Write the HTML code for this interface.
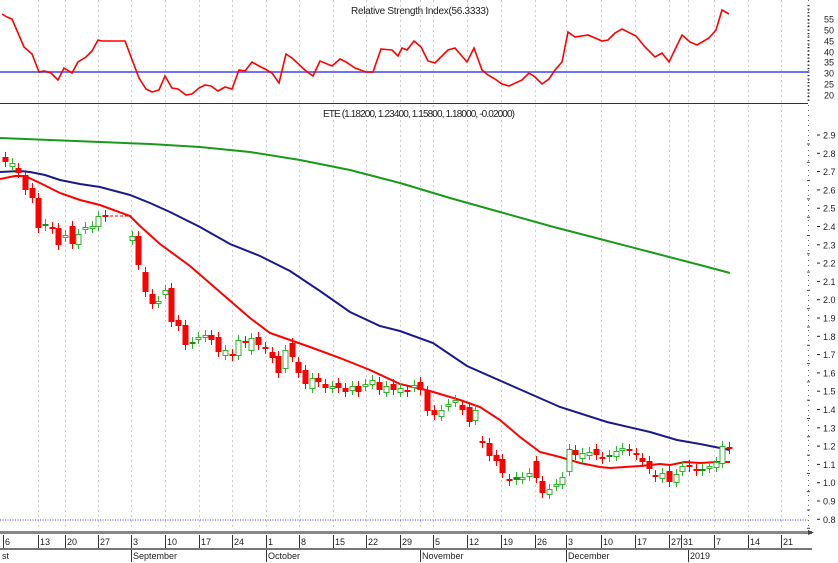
<!DOCTYPE html>
<html><head><meta charset="utf-8"><style>
html,body{margin:0;padding:0;background:#fff;width:838px;height:563px;overflow:hidden}
svg{display:block;font-family:"Liberation Sans",sans-serif}
</style></head><body>
<svg id="s" width="838" height="563" viewBox="0 0 838 563">
<rect width="838" height="563" fill="#fff"/>
<g id="grid" stroke="#ccc" stroke-dasharray="2,3" stroke-width="1"></g>
<text x="420" y="14" font-size="10" text-anchor="middle" textLength="138" fill="#222">Relative Strength Index(56.3333)</text>
<line x1="0" y1="72" x2="808" y2="72" stroke="#7070ff" stroke-width="2"/>
<polyline id="rsi" fill="none" stroke="#f00" stroke-width="1.6"/>
<line x1="0" y1="103.5" x2="808" y2="103.5" stroke="#333" stroke-width="1"/>
<text x="323" y="117" font-size="10" textLength="192" fill="#222">ETE (1.18200, 1.23400, 1.15800, 1.18000, -0.02000)</text>
<polyline id="ma200" fill="none" stroke="#1a9a1a" stroke-width="2"/>
<polyline id="ma50" fill="none" stroke="#1a1a8a" stroke-width="2"/>
<polyline id="ma20" fill="none" stroke="#f00" stroke-width="2"/>
<line x1="105" y1="216" x2="130" y2="216" stroke="#f00" stroke-dasharray="3,2"/>
<g id="candles"></g>
<line x1="0" y1="520" x2="808" y2="520" stroke="#3333ff" stroke-dasharray="1,1.5" stroke-width="1"/>
<line x1="808.5" y1="0" x2="808.5" y2="532" stroke="#666" stroke-dasharray="1,4"/>
<g id="axis" font-size="9" fill="#222"></g>
<rect x="0" y="531" width="812" height="3" fill="#888"/>
<rect x="0" y="548" width="812" height="2" fill="#777"/>
<polygon points="808,530 814,532.5 808,535" fill="#444"/>
<g id="dates" font-size="9" fill="#222"></g>
</svg>
<script>
var NS="http://www.w3.org/2000/svg";
function el(p,t,a,txt){var e=document.createElementNS(NS,t);for(var k in a)e.setAttribute(k,a[k]);if(txt!=null)e.textContent=txt;p.appendChild(e);return e;}
var grid=document.getElementById('grid');
var gx=[38,65,98,131,165,199,232,266,299,333,366,400,420,433,467,501,535,566,601,635,669,688,714,748,781];
gx.forEach(function(x){el(grid,'line',{x1:x+.5,y1:0,x2:x+.5,y2:530});});
document.getElementById('rsi').setAttribute('points',"2,14 7,17 12,19 24,47 32,54 39,72 44,71 51,73 58,80 64,68 72,73 78,62 86,57 92,51 98,40 102,41 125,41 139,78 146,89 152,92 159,90 165,76 172,88 178,89 186,95 192,94 199,88 205,85 211,86 218,91 225,87 232,89 239,70 245,71 252,62 259,66 265,69 272,73 279,83 286,54 292,58 306,71 313,76 320,61 332,66 340,59 346,62 355,68 366,72 373,72 381,49 392,50 398,56 402,48 407,50 414,41 421,47 428,61 435,63 448,50 455,48 467,62 474,48 482,70 488,75 495,79 502,84 509,86 522,80 529,73 535,77 542,84 549,79 555,70 562,62 568,32 575,37 588,35 602,41 608,40 615,33 622,29 636,36 645,47 655,57 662,53 669,62 682,35 690,42 697,45 709,38 716,30 722,10 729,14");
document.getElementById('ma200').setAttribute('points',"0,138 50,140 100,142 150,144 200,147 250,152 300,160 350,170 400,183 420,189 450,198 500,212 550,226 600,239 650,252 700,265 730,273");
document.getElementById('ma50').setAttribute('points',"0,172 20,171 30,172 45,175 60,180 80,184 100,187 130,195 150,203 170,212 200,227 230,244 260,256 290,271 320,291 350,312 380,326 400,331 433,343 467,366 510,385 560,407 607,422 650,432 677,440 700,444 730,450");
document.getElementById('ma20').setAttribute('points',"0,179 15,176 25,176 40,183 60,193 80,200 100,205 130,216 140,226 160,244 190,266 220,292 250,318 270,333 290,340 310,347 340,358 370,370 400,384 430,391 460,400 480,407 500,420 520,437 540,452 560,457 580,463 600,467 610,468 640,466 660,464 670,465 685,462 700,463 718,462 730,462");
var C=[[5,157,162,'r'],[12,163,166,'g'],[18,168,173,'r'],[25,175,190,'r'],[32,188,198,'r'],[38,198,228,'r'],[45,224,226,'G'],[52,227,229,'r'],[58,228,245,'r'],[65,235,237,'g'],[72,226,244,'r'],[78,234,244,'g'],[85,227,229,'g'],[92,226,228,'g'],[98,216,226,'g'],[105,215,217,'r'],[132,236,240,'g'],[138,236,265,'r'],[145,272,292,'r'],[152,294,304,'r'],[158,301,303,'g'],[165,290,294,'g'],[171,288,322,'r'],[178,320,326,'r'],[185,325,345,'r'],[192,342,344,'G'],[198,337,339,'g'],[205,335,337,'g'],[211,335,340,'r'],[218,337,352,'r'],[225,350,355,'g'],[232,354,356,'r'],[238,340,355,'g'],[245,341,343,'r'],[251,338,350,'g'],[258,337,345,'r'],[265,347,349,'r'],[272,352,358,'r'],[278,356,373,'r'],[285,350,368,'g'],[292,343,357,'r'],[298,362,373,'r'],[305,370,384,'r'],[312,378,388,'g'],[318,378,382,'r'],[325,384,388,'r'],[332,386,388,'g'],[338,383,388,'r'],[345,388,392,'r'],[352,386,390,'g'],[358,386,392,'r'],[365,384,386,'g'],[372,380,384,'g'],[379,382,390,'r'],[386,386,392,'g'],[393,384,390,'r'],[400,388,392,'g'],[407,390,392,'r'],[414,385,387,'g'],[420,382,390,'r'],[427,391,411,'r'],[434,410,415,'r'],[441,410,416,'g'],[448,404,406,'g'],[455,400,402,'g'],[462,405,410,'r'],[469,407,422,'r'],[475,410,420,'g'],[482,441,443,'r'],[489,443,456,'r'],[496,455,461,'r'],[502,459,473,'r'],[509,479,481,'r'],[516,477,480,'G'],[522,477,479,'g'],[529,473,476,'g'],[536,461,478,'r'],[542,481,493,'r'],[549,489,494,'g'],[556,484,486,'g'],[562,477,484,'g'],[569,449,471,'g'],[575,450,455,'r'],[582,453,458,'g'],[589,452,455,'g'],[596,449,455,'r'],[602,457,459,'r'],[609,455,457,'G'],[616,451,456,'g'],[622,448,450,'g'],[629,449,451,'r'],[636,453,455,'r'],[642,458,462,'r'],[649,461,469,'r'],[655,475,477,'r'],[662,473,478,'g'],[669,471,482,'r'],[676,474,482,'g'],[682,466,471,'g'],[689,465,467,'r'],[696,469,471,'r'],[702,469,471,'G'],[709,466,468,'g'],[716,462,467,'g'],[722,446,463,'g'],[729,447,449,'r']];
var cg=document.getElementById('candles');
C.forEach(function(c){var x=c[0],col=(c[3]=='r')?'#f00':'#2fb52f';
 el(cg,'line',{x1:x+.5,y1:c[1]-5,x2:x+.5,y2:c[2]+5,stroke:col,'stroke-width':1});
 if(c[3]=='g') el(cg,'rect',{x:x-2,y:c[1]+.5,width:5,height:Math.max(1,c[2]-c[1]),fill:'#fff',stroke:col,'stroke-width':1});
 else el(cg,'rect',{x:x-2.5,y:c[1],width:6,height:Math.max(2,c[2]-c[1]),fill:(c[3]=='G'?'#1a8a1a':'#f00')});
});
var ax=document.getElementById('axis');
for(var i=0;i<=21;i++){var p=(2.9-i*0.1),y=135+i*18.3;
 el(ax,'line',{x1:817,y1:y,x2:820,y2:y,stroke:'#222'});
 el(ax,'line',{x1:807,y1:y+9,x2:810,y2:y+9,stroke:'#444'});
 el(ax,'text',{x:823,y:y+3.5},p.toFixed(1));}
var rs=[[55,19],[50,30],[45,41],[40,52],[35,62],[30,73],[25,84],[20,95]];
rs.forEach(function(r){el(ax,'text',{x:824,y:r[1]+3.5},r[0]);});
for(var y=5;y<102;y+=3.5) el(ax,'rect',{x:807.5,y:y,width:2,height:1.2,fill:'#333'});
var dg=document.getElementById('dates');
var d=[[3,'6'],[38,'13'],[65,'20'],[98,'27'],[131,'3'],[165,'10'],[199,'17'],[232,'24'],[266,'1'],[299,'8'],[333,'15'],[366,'22'],[400,'29'],[433,'5'],[467,'12'],[501,'19'],[535,'26'],[566,'3'],[601,'10'],[635,'17'],[669,'27'],[681,'31'],[714,'7'],[748,'14'],[781,'21']];
d.forEach(function(a){el(dg,'line',{x1:a[0]+.5,y1:535,x2:a[0]+.5,y2:548,stroke:'#333'});el(dg,'text',{x:a[0]+2,y:545},a[1]);});
var m=[[0,'st'],[131,'September'],[266,'October'],[420,'November'],[566,'December'],[688,'2019']];
m.forEach(function(a){if(a[0]>0)el(dg,'line',{x1:a[0]+.5,y1:550,x2:a[0]+.5,y2:562,stroke:'#333'});el(dg,'text',{x:a[0]+2,y:559},a[1]);});
</script>
</body></html>
